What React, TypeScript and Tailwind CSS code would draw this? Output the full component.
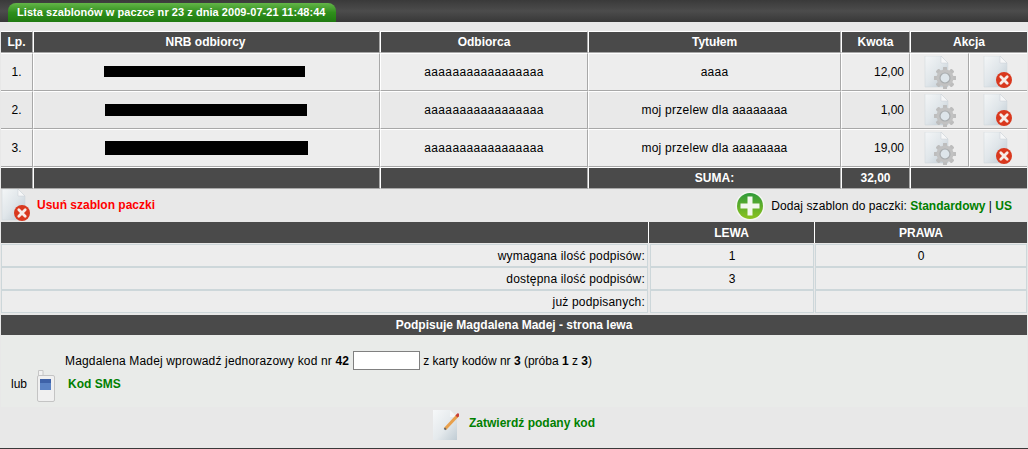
import React from "react";

const COLS = "grid grid-cols-[32px_347px_208px_253px_69px_59px_58px]";
const TH = "flex items-center justify-center h-[22px] bg-[#4a4a4a] text-white font-bold text-[12px] border-t border-t-white border-b border-b-[#a8a8a8] border-l border-l-white border-r border-r-[#a8a8a8]";

function Doc({ id }: { id: string }) {
  return (
    <>
      <defs>
        <linearGradient id={id} x1="0" y1="0" x2="1" y2="1">
          <stop offset="0" stopColor="#f4f6f7" />
          <stop offset="0.5" stopColor="#e0e6ea" />
          <stop offset="1" stopColor="#bcc8d1" />
        </linearGradient>
      </defs>
      <path d="M1 0H17L24 7V31H1Z" fill={`url(#${id})`} stroke="#ccd4d9" strokeWidth="0.5" />
      <path d="M17 0L24 7H17Z" fill="#f6f7f8" stroke="#c8cfd4" strokeWidth="0.5" />
    </>
  );
}

function GearIcon({ id }: { id: string }) {
  const teeth = [0, 45, 90, 135, 180, 225, 270, 315];
  return (
    <svg width="32" height="33" viewBox="0 0 32 33" className="shrink-0">
      <Doc id={id} />
      {teeth.map((a) => (
        <rect key={a} x="19" y="11" width="4" height="22" rx="0.8" fill="#bdbdbd" transform={`rotate(${a} 21 22)`} />
      ))}
      <circle cx="21" cy="22" r="8.5" fill="#c2c2c2" />
      <circle cx="21" cy="22" r="5" fill="#dde5ea" stroke="#a9adaf" strokeWidth="1.2" />
    </svg>
  );
}

function DelIcon({ id }: { id: string }) {
  return (
    <svg width="32" height="33" viewBox="0 0 32 33" className="shrink-0">
      <Doc id={id} />
      <circle cx="21" cy="24" r="8" fill="#d9381e" />
      <path d="M17.8 20.8L24.2 27.2M24.2 20.8L17.8 27.2" stroke="#f6ece8" strokeWidth="2.8" strokeLinecap="round" />
    </svg>
  );
}

function PlusIcon() {
  return (
    <svg width="30" height="30" viewBox="0 0 30 30" className="shrink-0">
      <defs>
        <linearGradient id="plusg" x1="0" y1="0" x2="0" y2="1">
          <stop offset="0" stopColor="#2f9a3a" />
          <stop offset="0.5" stopColor="#5fae2a" />
          <stop offset="1" stopColor="#8cc320" />
        </linearGradient>
      </defs>
      <circle cx="15" cy="15" r="14.5" fill="#f4f6f2" />
      <circle cx="15" cy="15" r="13" fill="url(#plusg)" />
      <path d="M12.5 5.5H17.5V12.5H24.5V17.5H17.5V24.5H12.5V17.5H5.5V12.5H12.5Z" fill="#f4f8ee" />
    </svg>
  );
}

function PencilIcon() {
  return (
    <svg width="26" height="31" viewBox="0 0 26 31" className="shrink-0">
      <defs>
        <linearGradient id="peng" x1="0" y1="0" x2="1" y2="1">
          <stop offset="0" stopColor="#f6f8f9" />
          <stop offset="0.55" stopColor="#e4e9ec" />
          <stop offset="1" stopColor="#c0ccd4" />
        </linearGradient>
      </defs>
      <path d="M0 0H17L24 7V30H0Z" fill="url(#peng)" />
      <path d="M17 0L24 7H17Z" fill="#f6f7f8" />
      <path d="M12 19L25 5" stroke="#e8a04c" strokeWidth="3" />
      <path d="M23.5 6.5L26 4" stroke="#c8403a" strokeWidth="3" />
      <path d="M12.8 18.2L12 19L11.6 19.6" stroke="#666" strokeWidth="2" />
    </svg>
  );
}

function PhoneIcon() {
  return (
    <svg width="19" height="32" viewBox="0 0 19 32" className="shrink-0">
      <path d="M1.5 0.5H6V6H1.5Z" fill="#f2f2f2" stroke="#c6c6c6" />
      <rect x="0.5" y="5.5" width="17" height="26" rx="1.5" fill="#f0f0f0" stroke="#c4c4c4" />
      <rect x="3" y="9" width="11" height="11" fill="#5a82c4" />
      <rect x="3" y="9" width="11" height="4" fill="#3e62a8" />
    </svg>
  );
}

const rows = [
  { n: "1.", t: "aaaa", k: "12,00", bg: "bg-[#ededed]", w: "w-[201px]", h: "h-[11px]", mr: "mr-[4px]", mt: "mt-[-2px]" },
  { n: "2.", t: "moj przelew dla aaaaaaaa", k: "1,00", bg: "bg-[#e9e9e9]", w: "w-[202px]", h: "h-[12px]", mr: "mr-[1px]", mt: "mt-[-1px]" },
  { n: "3.", t: "moj przelew dla aaaaaaaa", k: "19,00", bg: "bg-[#ededed]", w: "w-[203px]", h: "h-[14px]", mr: "mr-[0px]", mt: "mt-[0px]" },
];

function Sig({ a, b, c }: { a: string; b: string; c: string }) {
  const cell = "h-[23px] bg-[#ededed] border border-[#cdd7da] flex items-center";
  return (
    <div className="grid grid-cols-[648px_166px_212px] px-px">
      <div className={`${cell} justify-end pr-[2px] mr-px tracking-[0.19px]`}>{a}</div>
      <div className={`${cell} justify-center mx-px`}>{b}</div>
      <div className={`${cell} justify-center`}>{c}</div>
    </div>
  );
}

export default function App() {
  return (
    <div className="w-[1028px] h-[449px] overflow-hidden flex flex-col bg-[#e8e8e8] text-black text-[12px] font-['Liberation_Sans',Arial,sans-serif]">
      <div className="h-[22px] shrink-0 pl-2 pt-[3px] bg-gradient-to-b from-[#3a3a3a] via-[#4c4c4c] to-[#383838]">
        <div className="w-[328px] h-[19px] pl-[9px] rounded-t-[8px] flex items-center bg-gradient-to-b from-[#63b548] via-[#2f8f1b] to-[#1f7a10] text-white text-[11px] font-bold tracking-[0.05px]">
          Lista szablonów w paczce nr 23 z dnia 2009-07-21 11:48:44
        </div>
      </div>

      <div className="h-[9px] shrink-0" />

      <div className="px-px shrink-0">
        <div className={COLS}>
          <div className={`${TH} border-l-0`}>Lp.</div>
          <div className={`${TH} pr-[2px]`}>NRB odbiorcy</div>
          <div className={TH}>Odbiorca</div>
          <div className={TH}>Tytułem</div>
          <div className={TH}>Kwota</div>
          <div className={`${TH} col-span-2 border-r-0`}>Akcja</div>
        </div>
        {rows.map((r, i) => {
          const td = `flex items-center justify-center h-[38px] ${r.bg} border-t border-t-white border-b border-b-[#a8a8a8] border-l border-l-white border-r border-r-[#a8a8a8]`;
          return (
            <div key={r.n} className={COLS}>
              <div className={`${td} border-l-0`}>{r.n}</div>
              <div className={td}>
                <div className={`${r.w} ${r.h} ${r.mr} ${r.mt} bg-black`} />
              </div>
              <div className={`${td} tracking-[0.35px]`}>aaaaaaaaaaaaaaaaa</div>
              <div className={`${td} tracking-[0.25px]`}>{r.t}</div>
              <div className={`${td} justify-end pr-[5px]`}>{r.k}</div>
              <div className={td}><GearIcon id={`g${i}`} /></div>
              <div className={`${td} border-r-0`}><DelIcon id={`d${i}`} /></div>
            </div>
          );
        })}
        <div className={COLS}>
          <div className={`${TH} border-l-0`} />
          <div className={TH} />
          <div className={TH} />
          <div className={TH}>SUMA:</div>
          <div className={TH}>32,00</div>
          <div className={`${TH} col-span-2 border-r-0`} />
        </div>
      </div>

      <div className="h-[33px] shrink-0 flex items-center justify-between pl-px pr-[16px]">
        <div className="flex items-center gap-[4px]">
          <DelIcon id="dmain" />
          <span className="text-[#ff0000] font-bold mb-[2px]">Usuń szablon paczki</span>
        </div>
        <div className="flex items-center gap-[6px]">
          <PlusIcon />
          <span>
            <span className="tracking-[0.09px]">Dodaj szablon do paczki:</span> <b className="text-[#008000]">Standardowy</b> | <b className="text-[#008000]">US</b>
          </span>
        </div>
      </div>

      <div className="grid grid-cols-[648px_166px_212px] px-px shrink-0">
        <div className="h-[21px] bg-[#4a4a4a] border-r border-white" />
        <div className="h-[21px] bg-[#4a4a4a] border-r border-white text-white font-bold flex items-center justify-center">LEWA</div>
        <div className="h-[21px] bg-[#4a4a4a] text-white font-bold flex items-center justify-center">PRAWA</div>
      </div>
      <div className="h-px shrink-0" />
      <Sig a="wymagana ilość podpisów:" b="1" c="0" />
      <Sig a="dostępna ilość podpisów:" b="3" c="" />
      <Sig a="już podpisanych:" b="" c="" />

      <div className="h-[2px] shrink-0" />
      <div className="mx-px h-[20px] pb-[1px] shrink-0 bg-[#4a4a4a] text-white font-bold flex items-center justify-center">
        Podpisuje Magdalena Madej - strona lewa
      </div>

      <div className="mx-px h-[72px] shrink-0 bg-[#e9ebe9] pl-[10px] flex items-end pb-[5px] relative">
        <span className="mb-[9px]">lub</span>
        <div className="ml-[10px]"><PhoneIcon /></div>
        <div className="ml-[12px] flex flex-col mb-[9px] -mt-px">
          <b className="text-[#008000]">Kod SMS</b>
        </div>
        <div className="absolute left-[64px] top-[16px] flex items-center">
          <span className="tracking-[0.16px]">Magdalena Madej wprowadź jednorazowy kod nr <b>42</b></span>
          <input className="w-[67px] h-[19px] ml-[4px] mr-[3px] bg-white border border-[#808080]" />
          <span>z karty kodów nr <b>3</b> (próba <b>1</b> z <b>3</b>)</span>
        </div>
      </div>

      <div className="h-[41px] shrink-0 flex items-start justify-center pt-[3px]">
        <PencilIcon />
        <b className="text-[#008000] ml-[10px] mt-[4px]">Zatwierdź podany kod</b>
      </div>

      <div className="flex-1 bg-[#3a3a3a]" />
    </div>
  );
}
